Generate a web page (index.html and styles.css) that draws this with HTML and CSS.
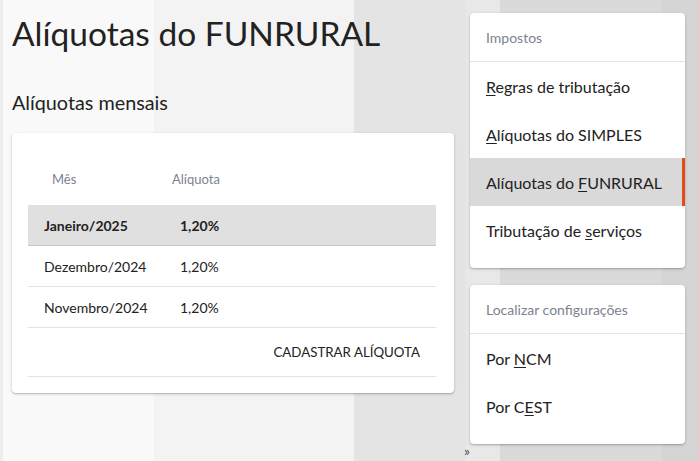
FILE: index.html
```html
<!DOCTYPE html>
<html lang="pt-BR">
<head>
<meta charset="utf-8">
<title>Alíquotas do FUNRURAL</title>
<link rel="stylesheet" href="styles.css">
</head>
<body>
<div class="page">
  <main class="content">
    <h1 class="title">Alíquotas do FUNRURAL</h1>
    <h2 class="subtitle">Alíquotas mensais</h2>
    <section class="card table-card">
      <div class="thead">
        <span class="col-month">Mês</span>
        <span class="col-rate">Alíquota</span>
      </div>
      <div class="row selected">
        <span class="col-month">Janeiro/2025</span>
        <span class="col-rate">1,20%</span>
      </div>
      <div class="row">
        <span class="col-month">Dezembro/2024</span>
        <span class="col-rate">1,20%</span>
      </div>
      <div class="row">
        <span class="col-month">Novembro/2024</span>
        <span class="col-rate">1,20%</span>
      </div>
      <div class="actions">
        <button class="btn-text">CADASTRAR ALÍQUOTA</button>
      </div>
    </section>
  </main>
  <aside class="sidebar">
    <nav class="card menu">
      <div class="menu-header">Impostos</div>
      <a class="menu-item"><span><u>R</u>egras de tributação</span></a>
      <a class="menu-item"><span><u>A</u>líquotas do SIMPLES</span></a>
      <a class="menu-item active"><span>Alíquotas do <u>F</u>UNRURAL</span></a>
      <a class="menu-item"><span>Tributação de <u>s</u>erviços</span></a>
    </nav>
    <nav class="card menu">
      <div class="menu-header">Localizar configurações</div>
      <a class="menu-item"><span>Por <u>N</u>CM</span></a>
      <a class="menu-item"><span>Por C<u>E</u>ST</span></a>
    </nav>
    <div class="collapse">»</div>
  </aside>
</div>
</body>
</html>
```

FILE: styles.css
```css
* { box-sizing: border-box; }

html, body {
  margin: 0;
  height: 100%;
}

body {
  font-family: "Lato", "Noto Sans", sans-serif;
  color: #222;
  overflow: hidden;
  background-color: #d6d6d6;
  background-image:
    linear-gradient(to right,
      #ededed 0, #ededed 3px,
      #f9f9f9 3px, #f9f9f9 154px,
      #f3f3f3 154px, #f3f3f3 354px,
      #e4e4e4 354px, #e4e4e4 466px,
      #e8e8e8 466px, #e8e8e8 500px,
      #dadada 500px, #dadada 662px,
      #d5d5d5 662px, #d5d5d5 100%);
}

.page {
  display: flex;
  align-items: flex-start;
  height: 100%;
}

.content {
  width: 454px;
  padding-left: 12px;
  flex: none;
}

.title {
  margin: 13px 0 0;
  font-size: 33.5px;
  line-height: 40px;
  font-weight: 400;
  color: #222;
}

.subtitle {
  margin: 37px 0 0;
  font-size: 19.8px;
  line-height: 24px;
  font-weight: 400;
  color: #222;
}

.card {
  background: #fff;
  border-radius: 4px;
  box-shadow: 0 1px 3px rgba(0,0,0,0.22), 0 1px 1px rgba(0,0,0,0.1);
}

.table-card {
  margin-top: 19px;
  padding: 20px 18px 16px 16px;
}

.thead, .row {
  display: flex;
  align-items: center;
}

.thead {
  height: 52px;
  font-size: 13px;
  color: #7d8290;
}

.thead .col-month { width: 144px; padding-left: 24px; }

.row {
  height: 41px;
  font-size: 14px;
  border-bottom: 1px solid #e2e2e2;
}

.row .col-month { width: 152px; padding-left: 16px; }

.row.selected {
  background: #e0e0e0;
  font-weight: 700;
  border-bottom-color: #c8c8c8;
}

.actions {
  display: flex;
  justify-content: flex-end;
  height: 49px;
  align-items: center;
  border-bottom: 1px solid #e2e2e2;
  padding-right: 16px;
}

.btn-text {
  background: none;
  border: 0;
  padding: 0;
  font-family: inherit;
  font-size: 13.3px;
  color: #222;
}

.sidebar {
  width: 215px;
  margin-left: 16px;
  padding-top: 13px;
  display: flex;
  flex-direction: column;
  gap: 17px;
  position: relative;
}

.menu {
  display: flex;
  flex-direction: column;
  padding-bottom: 14px;
}

.menu-header {
  height: 49px;
  display: flex;
  align-items: center;
  padding-left: 16px;
  font-size: 14px;
  color: #7d8290;
  border-bottom: 1px solid #e2e2e2;
}

.menu-item {
  height: 48px;
  display: flex;
  align-items: center;
  padding-left: 16px;
  font-size: 16px;
  color: #222;
  text-decoration: none;
}

.menu-item u {
  text-underline-offset: 2px;
}

.menu-item.active {
  background: #d9d9d9;
  border-right: 3px solid #e64a19;
}

.collapse {
  position: absolute;
  left: -6px;
  top: 443px;
  font-size: 14px;
  line-height: 16px;
  color: #555;
}
```
